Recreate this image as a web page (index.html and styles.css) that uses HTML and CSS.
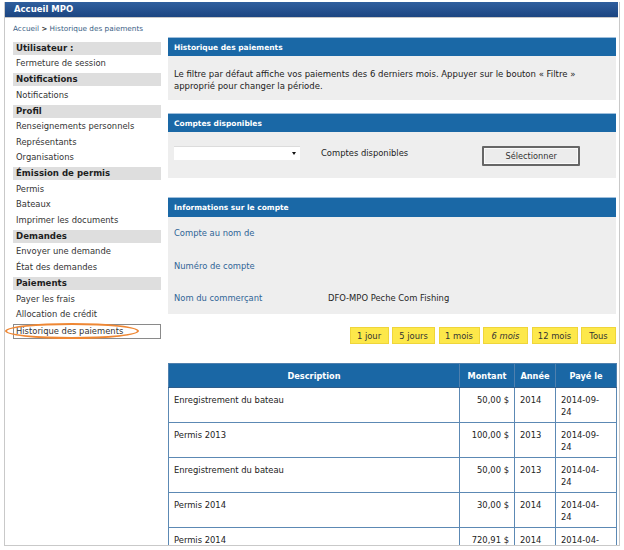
FILE: index.html
```html
<!DOCTYPE html>
<html lang="fr">
<head>
<meta charset="utf-8">
<title>Historique des paiements</title>
<link rel="stylesheet" href="styles.css">
</head>
<body>
<div class="frame">
  <header class="topbar">Accueil MPO</header>
  <nav class="crumbs">Accueil <b class="sep">&gt;</b> Historique des paiements</nav>
  <div class="page">
    <aside class="sidebar">
      <div class="sec">Utilisateur :</div>
      <div class="item">Fermeture de session</div>
      <div class="sec">Notifications</div>
      <div class="item">Notifications</div>
      <div class="sec">Profil</div>
      <div class="item">Renseignements personnels</div>
      <div class="item">Représentants</div>
      <div class="item">Organisations</div>
      <div class="sec">Émission de permis</div>
      <div class="item">Permis</div>
      <div class="item">Bateaux</div>
      <div class="item">Imprimer les documents</div>
      <div class="sec">Demandes</div>
      <div class="item">Envoyer une demande</div>
      <div class="item">État des demandes</div>
      <div class="sec">Paiements</div>
      <div class="item">Payer les frais</div>
      <div class="item">Allocation de crédit</div>
      <div class="item current"><span class="ring"></span>Historique des paiements</div>
    </aside>
    <main class="main">
      <section class="panel p1">
        <h2 class="phead">Historique des paiements</h2>
        <div class="pbody intro">Le filtre par défaut affiche vos paiements des 6 derniers mois. Appuyer sur le bouton « Filtre » approprié pour changer la période.</div>
      </section>
      <section class="panel p2">
        <h2 class="phead">Comptes disponibles</h2>
        <div class="pbody accounts">
          <div class="select"><span class="caret"></span></div>
          <span class="acc-label">Comptes disponibles</span>
          <button class="btn">Sélectionner</button>
        </div>
      </section>
      <section class="panel p3">
        <h2 class="phead">Informations sur le compte</h2>
        <div class="pbody info">
          <div class="irow"><span class="ilabel">Compte au nom de</span><span class="ival"></span></div>
          <div class="irow"><span class="ilabel">Numéro de compte</span><span class="ival"></span></div>
          <div class="irow last"><span class="ilabel">Nom du commerçant</span><span class="ival">DFO-MPO Peche Com Fishing</span></div>
        </div>
      </section>
      <div class="filters">
        <span class="fb w1">1 jour</span>
        <span class="fb w2">5 jours</span>
        <span class="fb w3">1 mois</span>
        <span class="fb w4 active">6 mois</span>
        <span class="fb w5">12 mois</span>
        <span class="fb w6">Tous</span>
      </div>
      <table class="pay">
        <colgroup><col class="c1"><col class="c2"><col class="c3"><col class="c4"></colgroup>
        <thead>
          <tr><th>Description</th><th>Montant</th><th>Année</th><th>Payé le</th></tr>
        </thead>
        <tbody>
          <tr><td>Enregistrement du bateau</td><td class="amt">50,00 $</td><td>2014</td><td>2014-09-24</td></tr>
          <tr><td>Permis 2013</td><td class="amt">100,00 $</td><td>2013</td><td>2014-09-24</td></tr>
          <tr><td>Enregistrement du bateau</td><td class="amt">50,00 $</td><td>2013</td><td>2014-04-24</td></tr>
          <tr><td>Permis 2014</td><td class="amt">30,00 $</td><td>2014</td><td>2014-04-24</td></tr>
          <tr><td>Permis 2014</td><td class="amt">720,91 $</td><td>2014</td><td>2014-04-24</td></tr>
        </tbody>
      </table>
    </main>
  </div>
</div>
</body>
</html>
```

FILE: styles.css
```css
html, body {
  margin: 0;
  padding: 0;
  background: #ffffff;
}
body {
  font-family: "DejaVu Sans", Verdana, sans-serif;
  font-size: 8.4px;
  color: #222;
}
.frame {
  margin: 2px 0 0 4px;
  width: 614px;
  height: 543px;
  border: 1px solid #c9c9c9;
  border-top: none;
  overflow: hidden;
  box-sizing: content-box;
}
.topbar {
  height: 15px;
  line-height: 15px;
  padding-left: 9px;
  margin-right: 1px;
  background: linear-gradient(#2f5f9e, #1c4581);
  color: #fff;
  font-weight: bold;
  font-size: 8.5px;
  border-bottom: 1px solid #c8c8c8;
}
.crumbs {
  height: 17px;
  line-height: 17px;
  padding-top: 2px;
  padding-left: 8px;
  font-size: 7.3px;
  color: #3c5f86;
}
.crumbs .sep { font-size: 7px; color: #333; }
.page {
  display: flex;
  gap: 7px;
  padding: 0 4px 0 8px;
}
.sidebar {
  width: 148px;
  flex: none;
  padding-top: 3.5px;
}
.sec {
  height: 13px;
  line-height: 13px;
  margin: 1.35px 0;
  background: #dedede;
  font-weight: bold;
  font-size: 8.6px;
  padding-left: 3px;
  color: #1e1e1e;
}
.item {
  height: 15.7px;
  line-height: 15.7px;
  padding-left: 3px;
  color: #333;
}
.item.current {
  position: relative;
  height: 13px;
  line-height: 13px;
  margin: 1.35px 0;
  border: 1px solid #8a8a8a;
  padding-left: 2px;
  box-sizing: content-box;
  width: 144px;
}
.ring {
  position: absolute;
  left: -9px;
  top: -2px;
  width: 130px;
  height: 12px;
  border: 2px solid #ee8734;
  border-radius: 50%;
}
.main {
  width: 448px;
  flex: none;
}
.panel { background: #eeeeee; }
.phead {
  margin: 0;
  height: 19px;
  line-height: 19px;
  background: #1a68a6;
  color: #fff;
  font-size: 7.5px;
  font-weight: bold;
  padding-left: 6px;
  border-top: 1px solid #9fbfdc;
  box-sizing: border-box;
}
.p2 { margin-top: 13px; }
.p3 { margin-top: 19px; }
.p3 .phead { height: 20px; line-height: 20px; }
.pbody { padding-left: 6px; }
.intro {
  padding: 12px 20px 8px 6px;
  line-height: 12px;
  height: 24px;
  font-size: 8.5px;
}
.accounts {
  display: flex;
  align-items: flex-start;
  height: 46px;
  padding-top: 14px;
  box-sizing: border-box;
}
.select {
  width: 126px;
  height: 14px;
  background: #fff;
  border-top: 1px solid #dcdcdc;
  box-sizing: border-box;
  position: relative;
}
.caret {
  position: absolute;
  right: 4px;
  top: 5px;
  border-left: 2.5px solid transparent;
  border-right: 2.5px solid transparent;
  border-top: 3px solid #111;
}
.acc-label {
  margin-left: 21px;
  line-height: 14px;
  color: #222;
}
.btn {
  margin-left: 74px;
  width: 98px;
  height: 20px;
  background: #ececec;
  border: 2px solid #666;
  border-radius: 1px;
  box-shadow: inset 0 0 0 1px #fafafa;
  font-family: "DejaVu Sans", Verdana, sans-serif;
  font-size: 8.2px;
  color: #333;
  padding: 0;
}
.info {
  padding-top: 10px;
  padding-bottom: 10px;
}
.irow {
  display: flex;
  height: 32.5px;
  line-height: 12px;
}
.irow.last { height: 12px; }
.ilabel {
  width: 154px;
  color: #2f6496;
}
.ival { color: #1e1e1e; }
.filters {
  display: flex;
  justify-content: flex-end;
  gap: 3.5px;
  margin-top: 13px;
}
.fb {
  height: 17px;
  line-height: 17px;
  background: #fde84a;
  border: 1px solid #efd53a;
  box-sizing: border-box;
  text-align: center;
  color: #333;
}
.fb.w1 { width: 39px; }
.fb.w2 { width: 43px; }
.fb.w3 { width: 41px; }
.fb.w4 { width: 45px; }
.fb.w5 { width: 46px; }
.fb.w6 { width: 35px; }
.fb.active { font-style: italic; }
.pay {
  margin-top: 19px;
  width: 448px;
  border-collapse: collapse;
  table-layout: fixed;
  border: 1px solid #4f80ae;
}
.c1 { width: 291px; }
.c2 { width: 55px; }
.c3 { width: 41px; }
.c4 { width: 61px; }
.pay th {
  background: #1a67a5;
  color: #fff;
  font-weight: bold;
  font-size: 8.2px;
  height: 23px;
  padding: 0;
  border: 1px solid #4f80ae;
  border-bottom-color: #2e5d8a;
}
.pay td {
  border: 1px solid #5c89b4;
  vertical-align: top;
  height: 35px;
  padding: 6px 5px 0 5px;
  line-height: 12px;
  box-sizing: border-box;
  color: #222;
}
.pay td.amt { text-align: right; }
.pay td:nth-child(4) { padding-right: 14px; }
```
